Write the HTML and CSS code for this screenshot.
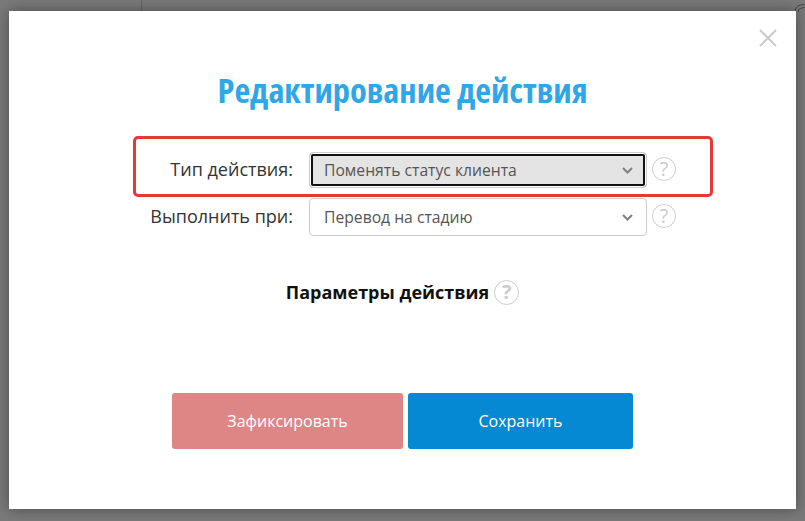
FILE: index.html
```html
<!DOCTYPE html>
<html lang="ru">
<head>
    <meta charset="UTF-8">
    <title>Редактирование действия</title>
    <link rel="stylesheet" href="styles.css">
</head>
<body>
    <div class="page-line"></div>
    <svg class="page-corner" width="10" height="12" viewBox="0 0 10 12"><path d="M0.5 11.5V9C0.5 6 3 4 9.5 3.5M3.5 11V9.5C3.5 8 6 7 9.5 6.5" stroke="#3f3f3f" stroke-width="1" fill="none"/></svg>
    <div class="modal">
        <button class="close" aria-label="Закрыть">
            <svg width="18" height="18" viewBox="0 0 18 18"><path d="M1 1L17 17M17 1L1 17" stroke="#cbcbcb" stroke-width="2" fill="none"/></svg>
        </button>
        <h1>Редактирование действия</h1>
        <div class="form">
            <div class="highlight"></div>
            <div class="row row-type">
                <label>Тип действия:</label>
                <div class="select focused">
                    <span>Поменять статус клиента</span>
                    <svg class="arrow" width="11" height="7" viewBox="0 0 11 7"><path d="M1 1L5.5 5.5L10 1" stroke="#808080" stroke-width="2" fill="none"/></svg>
                </div>
                <span class="help">?</span>
            </div>
            <div class="row">
                <label>Выполнить при:</label>
                <div class="select">
                    <span>Перевод на стадию</span>
                    <svg class="arrow" width="11" height="7" viewBox="0 0 11 7"><path d="M1 1L5.5 5.5L10 1" stroke="#808080" stroke-width="2" fill="none"/></svg>
                </div>
                <span class="help">?</span>
            </div>
        </div>
        <div class="params">
            <strong>Параметры действия</strong>
            <span class="help help-bold">?</span>
        </div>
        <div class="buttons">
            <button class="btn btn-fix">Зафиксировать</button>
            <button class="btn btn-save">Сохранить</button>
        </div>
    </div>
</body>
</html>
```

FILE: styles.css
```css
html, body {
    height: 100%;
}
body {
    margin: 0;
    padding: 11px 9px 12px;
    box-sizing: border-box;
    background-color: #7a7a7a;
    font-family: "Open Sans", Arial, sans-serif;
    overflow: hidden;
    position: relative;
}
.page-line {
    position: absolute;
    left: 141px;
    top: 0;
    width: 1px;
    height: 11px;
    background: #666;
}
.page-corner {
    position: absolute;
    right: 0;
    top: 1px;
}
.modal {
    position: relative;
    height: 498px;
    box-sizing: border-box;
    background: #fff;
    box-shadow: 0 0 14px rgba(0,0,0,0.4);
    padding-top: 57px;
}
.close {
    position: absolute;
    top: 18px;
    right: 19px;
    padding: 0;
    border: 0;
    background: none;
    line-height: 0;
}
h1 {
    margin: 0;
    height: 44px;
    line-height: 44px;
    text-align: center;
    font-size: 34.4px;
    font-weight: 700;
    font-stretch: 75%;
    color: #2ea6e8;
}
.form {
    position: relative;
    margin-top: 40px;
}
.highlight {
    position: absolute;
    left: 124px;
    top: -16px;
    width: 580px;
    height: 61px;
    box-sizing: border-box;
    border: 3px solid #e53935;
    border-radius: 5px;
}
.row {
    display: flex;
    align-items: center;
    height: 38px;
}
.row-type {
    height: 36px;
    margin-bottom: 10px;
}
.row label {
    width: 284px;
    text-align: right;
    font-size: 18px;
    color: #333;
    margin-top: -2px;
}
.select {
    display: flex;
    align-items: center;
    justify-content: space-between;
    box-sizing: border-box;
    width: 338px;
    height: 100%;
    margin-left: 16px;
    padding: 0 13px 0 14px;
    border: 1px solid #ccc;
    border-radius: 4px;
    background: #fff;
    font-size: 15.7px;
    color: #555;
}
.select.focused {
    background: #e4e4e4;
    box-shadow: inset 0 0 0 1px #fff, inset 0 0 0 3px #111;
}
.help {
    width: 24px;
    height: 24px;
    box-sizing: border-box;
    margin-left: 5px;
    margin-top: -3px;
    border: 1px solid #ccc;
    border-radius: 50%;
    text-align: center;
    font-size: 20px;
    line-height: 22px;
    color: #ccc;
}
.params {
    display: flex;
    justify-content: center;
    align-items: center;
    margin-top: 44px;
    height: 24px;
    font-size: 18px;
    color: #111;
}
.help-bold {
    margin: 0 0 0 5px;
    width: 25px;
    height: 25px;
    font-weight: 700;
    font-size: 20px;
}
.buttons {
    display: flex;
    justify-content: center;
    gap: 5px;
    margin-top: 89px;
}
.btn {
    height: 56px;
    padding: 0;
    border: 0;
    border-radius: 3px;
    color: #fff;
    font-family: inherit;
    font-size: 16px;
}
.btn-fix {
    width: 231px;
    background: #de8585;
}
.btn-save {
    width: 225px;
    background: #0589d3;
}
```
